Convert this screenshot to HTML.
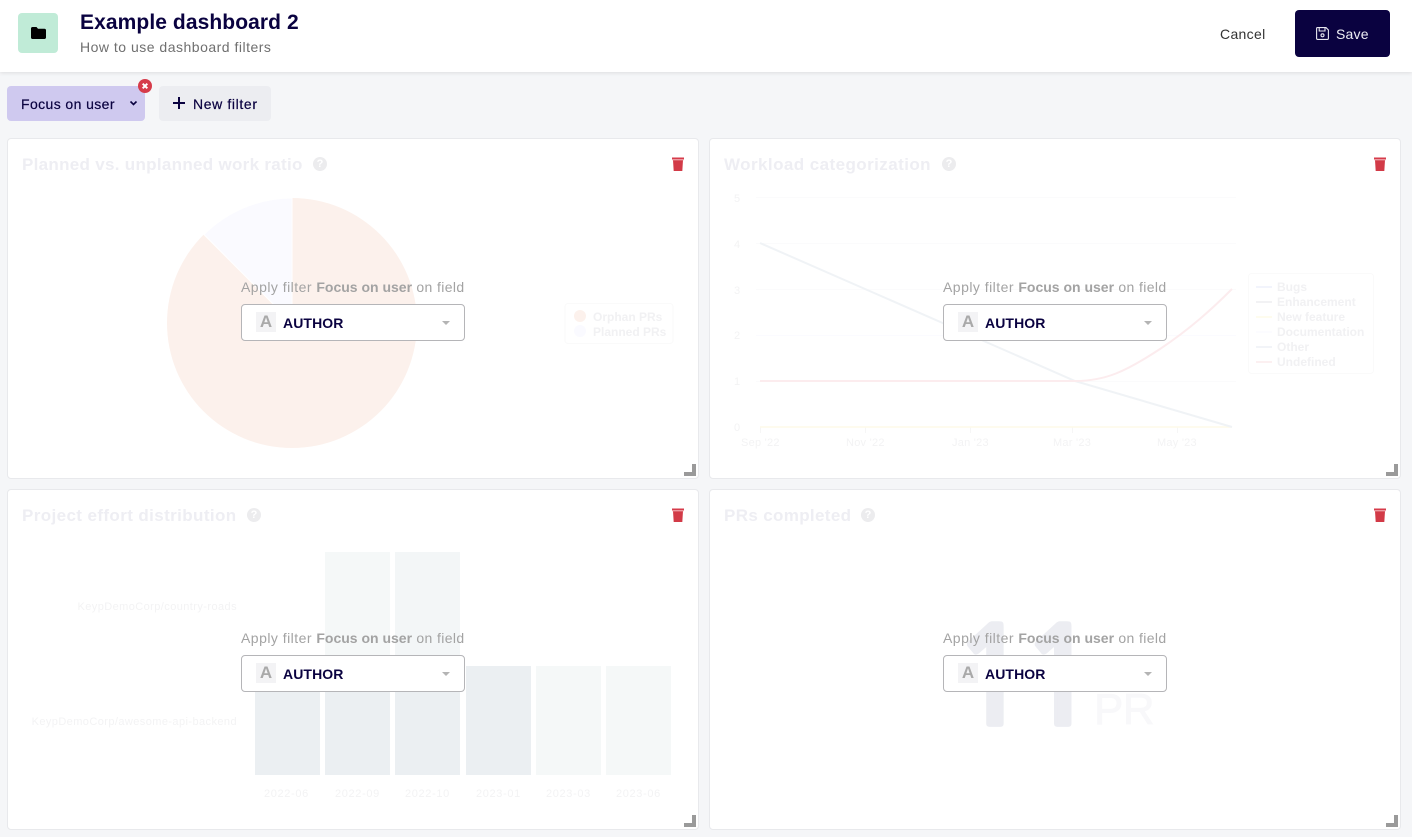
<!DOCTYPE html>
<html><head><meta charset="utf-8">
<style>
html,body{margin:0;padding:0}
body{width:1412px;height:837px;background:#f5f6f8;font-family:"Liberation Sans",sans-serif;position:relative;overflow:hidden;color:#0a0240}
.a{position:absolute;white-space:nowrap}
.hdr{left:0;top:0;width:1412px;height:72px;background:#fff;box-shadow:0 1px 4px rgba(0,0,0,.1)}
.card{position:absolute;width:690px;height:339px;background:#fff;border:1px solid #e8e9ec;border-radius:4px;box-sizing:content-box}
.ct{font-weight:bold;font-size:17px;color:#eeeef3;line-height:20px}
.q{width:14px;height:14px;border-radius:50%;background:#ececee;color:#fff;font-size:11px;font-weight:bold;text-align:center;line-height:14px}
.ap{font-size:14px;line-height:18px;color:#a3a3a3;letter-spacing:.47px}
.ap b{color:#a3a3a3;letter-spacing:0}
.ap span{letter-spacing:.39px}
.sel{width:222px;height:35px;background:#fff;border:1px solid #b5b5b8;border-radius:4px}
.ic{width:20px;height:20px;background:#f3f3f5;color:#a9a9a9;font:bold 17px/20px "Liberation Sans",sans-serif;text-align:center}
.au{font-size:14px;font-weight:bold;line-height:18px;color:#0a0240;letter-spacing:.1px}
.ar{width:0;height:0;border-left:4.5px solid transparent;border-right:4.5px solid transparent;border-top:4.5px solid #b4b4b4}
.lbl{font-size:11px;line-height:14px;color:#f3f3f4;letter-spacing:.25px}
.kp{letter-spacing:.42px;right:1175px}
.dt{letter-spacing:.65px}
.lg{font-size:12px;font-weight:bold;line-height:15px;color:#f1f1f3}
.m{-webkit-text-stroke:.2px #0a0240}
</style></head>
<body>
<div class="a hdr"></div>
<div class="a" style="left:18px;top:13px;width:40px;height:40px;background:#c0ebd7;border-radius:4px"></div>
<svg class="a" style="left:31px;top:27px" width="15" height="12" viewBox="0 0 15 12"><path d="M0 1.5C0 .7.6 0 1.4 0H5.5L7 1.7H13.5C14.3 1.7 15 2.3 15 3.1V10.5C15 11.3 14.3 12 13.5 12H1.4C.6 12 0 11.3 0 10.5Z" fill="#000"/></svg>
<div class="a" style="left:80px;top:10px;font-size:21px;font-weight:bold;line-height:26px;letter-spacing:.09px">Example dashboard 2</div>
<div class="a" style="left:80px;top:38px;font-size:14px;line-height:18px;color:#6f6f6f;letter-spacing:.5px">How to use dashboard filters</div>
<div class="a" style="left:1220px;top:25px;font-size:14px;line-height:18px;color:#333;letter-spacing:.33px">Cancel</div>
<div class="a" style="left:1295px;top:10px;width:95px;height:47px;background:#0a0240;border-radius:4px"></div>
<svg class="a" style="left:1316px;top:27px" width="13" height="13" viewBox="0 0 13 13" fill="none" stroke="#e8e7f0" stroke-width="1.1"><path d="M.6 1.6C.6 1 1 .6 1.6.6H10L12.4 3V11.4C12.4 12 12 12.4 11.4 12.4H1.6C1 12.4.6 12 .6 11.4Z"/><path d="M3.2.8V4H9V.8"/><circle cx="6.5" cy="8.3" r="1.5"/></svg>
<div class="a" style="left:1336px;top:25px;font-size:14px;line-height:18px;color:#eeeef5;letter-spacing:.2px">Save</div>

<div class="a" style="left:7px;top:86px;width:138px;height:35px;background:#cfc9ef;border-radius:4px"></div>
<div class="a m" style="left:21px;top:95px;font-size:14px;line-height:18px;letter-spacing:.4px">Focus on user</div>
<svg class="a" style="left:129px;top:100px" width="9" height="7" viewBox="0 0 9 7"><path d="M1.5 1.5L4.5 4.5L7.500 1.500" fill="none" stroke="#0a0240" stroke-width="1.6"/></svg>
<svg class="a" style="left:138px;top:79px" width="14" height="14" viewBox="0 0 14 14"><circle cx="7" cy="7" r="7" fill="#d63b4a"/><path d="M4.700 4.700L9.300 9.300M9.300 4.700L4.700 9.300" stroke="#fff" stroke-width="2"/></svg>
<div class="a" style="left:159px;top:86px;width:112px;height:35px;background:#ecedf1;border-radius:4px"></div>
<svg class="a" style="left:173px;top:97px" width="12" height="12" viewBox="0 0 12 12"><path d="M6 0V12M0 6H12" stroke="#0a0240" stroke-width="2"/></svg>
<div class="a m" style="left:193px;top:95px;font-size:14px;line-height:18px;letter-spacing:.63px">New filter</div>

<div class="card" style="left:7px;top:138px"></div>
<div class="card" style="left:709px;top:138px"></div>
<div class="card" style="left:7px;top:489px"></div>
<div class="card" style="left:709px;top:489px"></div>

<div class="a ct" style="left:22px;top:155px;letter-spacing:.3px">Planned vs. unplanned work ratio</div>
<div class="a q" style="left:313px;top:157px">?</div>
<div class="a ct" style="left:724px;top:155px;letter-spacing:.43px">Workload categorization</div>
<div class="a q" style="left:942px;top:157px">?</div>
<div class="a ct" style="left:22px;top:506px;letter-spacing:.39px">Project effort distribution</div>
<div class="a q" style="left:247px;top:508px">?</div>
<div class="a ct" style="left:724px;top:506px;letter-spacing:.35px">PRs completed</div>
<div class="a q" style="left:861px;top:508px">?</div>

<svg class="a" style="left:0;top:0" width="1412" height="837">
<circle cx="292" cy="323" r="125" fill="#fcf1ec"/>
<path d="M292 323L204 234.6A125 125 0 0 1 292 198Z" fill="#fafaff" stroke="#fff" stroke-width="1"/>
<g stroke="#fbfbfc" stroke-width="1"><path d="M756 197.5H1236M756 243.5H1236M756 289.5H1236M756 381.5H1236"/></g>
<path d="M756 335.5H1236" stroke="#fbfbff"/>
<g stroke="#f6f6f6"><path d="M760.5 427V433M865.5 427V433M970.5 427V433M1072.5 427V433M1177.5 427V433"/></g>
<path d="M760 427H1232" stroke="#fdfae9" stroke-width="1.5"/>
<path d="M760 243L1075 381L1232 427" fill="none" stroke="#f0f3f6" stroke-width="2"/>
<path d="M760 381H1075C1105 381 1125 372 1160 349C1190 329 1212 309 1232 289" fill="none" stroke="#fcecee" stroke-width="2"/>
<rect x="565" y="303.5" width="108" height="40" rx="3" fill="#fff" stroke="#fafafa"/>
<circle cx="580" cy="316" r="6" fill="#fcf1ec"/><circle cx="580" cy="331" r="6" fill="#fafaff"/>
<rect x="1248.5" y="273.5" width="125" height="100" rx="3" fill="#fff" stroke="#fafafa"/>
<g stroke-width="1.5"><path d="M1256 287H1272" stroke="#edf1fb"/><path d="M1256 302H1272" stroke="#eeeef1"/><path d="M1256 317H1272" stroke="#fdfae9"/><path d="M1256 332H1272" stroke="#fafaff"/><path d="M1256 347H1272" stroke="#eef1f5"/><path d="M1256 362H1272" stroke="#fbeaec"/></g>
<rect x="325" y="552" width="65" height="114" fill="#f5f8f8"/><rect x="395" y="552" width="65" height="114" fill="#f3f6f7"/>
<rect x="255" y="666" width="65" height="109" fill="#ebeff2"/><rect x="325" y="666" width="65" height="109" fill="#ebeff2"/><rect x="395" y="666" width="65" height="109" fill="#ebeff2"/><rect x="466" y="666" width="65" height="109" fill="#ebeff2"/><rect x="536" y="666" width="65" height="109" fill="#f5f8f8"/><rect x="606" y="666" width="65" height="109" fill="#f5f8f8"/>
<defs><g id="t"><path d="M0 .5H12V2H0Z" fill="#d63b4a"/><path d="M0 2H12V3.200H0Z" fill="#ec98a0"/><path d="M1 3.200H11L10.300 14H1.700Z" fill="#d23a47"/></g></defs>
<use href="#t" x="672" y="157"/><use href="#t" x="1374" y="157"/><use href="#t" x="672" y="508"/><use href="#t" x="1374" y="508"/>
<g fill="#9a9a9a"><path d="M684 476H696V464H692V472H684Z"/><path d="M1386 476H1398V464H1394V472H1386Z"/><path d="M684 827H696V815H692V823H684Z"/><path d="M1386 827H1398V815H1394V823H1386Z"/></g>
</svg>

<div class="a lbl" style="left:734px;top:192px">5</div><div class="a lbl" style="left:734px;top:238px">4</div><div class="a lbl" style="left:734px;top:284px">3</div><div class="a lbl" style="left:734px;top:329px">2</div><div class="a lbl" style="left:734px;top:375px">1</div><div class="a lbl" style="left:734px;top:421px">0</div>
<div class="a lbl" style="left:741px;top:436px">Sep '22</div><div class="a lbl" style="left:846px;top:436px">Nov '22</div><div class="a lbl" style="left:952px;top:436px">Jan '23</div><div class="a lbl" style="left:1053px;top:436px">Mar '23</div><div class="a lbl" style="left:1157px;top:436px">May '23</div>
<div class="a lg" style="left:593px;top:310px">Orphan PRs</div><div class="a lg" style="left:593px;top:325px">Planned PRs</div>
<div class="a lg" style="left:1277px;top:280px">Bugs</div><div class="a lg" style="left:1277px;top:295px">Enhancement</div><div class="a lg" style="left:1277px;top:310px">New feature</div><div class="a lg" style="left:1277px;top:325px">Documentation</div><div class="a lg" style="left:1277px;top:340px">Other</div><div class="a lg" style="left:1277px;top:355px">Undefined</div>
<div class="a lbl kp" style="top:600px">KeypDemoCorp/country-roads</div><div class="a lbl kp" style="top:715px">KeypDemoCorp/awesome-api-backend</div>
<div class="a lbl dt" style="left:264px;top:787px">2022-06</div><div class="a lbl dt" style="left:335px;top:787px">2022-09</div><div class="a lbl dt" style="left:405px;top:787px">2022-10</div><div class="a lbl dt" style="left:476px;top:787px">2023-01</div><div class="a lbl dt" style="left:546px;top:787px">2023-03</div><div class="a lbl dt" style="left:616px;top:787px">2023-06</div>
<div class="a" style="left:951px;top:604px;font-family:'NanumGothic','Liberation Sans',sans-serif;font-size:135px;font-weight:700;line-height:150px;color:#ecedf2;letter-spacing:-14px;-webkit-text-stroke:3px #ecedf2">11</div>
<div class="a" style="left:1094px;top:685px;font-size:44px;line-height:50px;color:#f8f8fa;letter-spacing:-.5px;-webkit-text-stroke:.8px #f8f8fa">PR</div>

<div class="a ap" style="left:241px;top:278px">Apply filter <b>Focus on user</b><span> on field</span></div>
<div class="a sel" style="left:241px;top:304px"></div><div class="a ic" style="left:256px;top:312px">A</div><div class="a au" style="left:283px;top:314px">AUTHOR</div><div class="a ar" style="left:442px;top:321px"></div>
<div class="a ap" style="left:943px;top:278px">Apply filter <b>Focus on user</b><span> on field</span></div>
<div class="a sel" style="left:943px;top:304px"></div><div class="a ic" style="left:958px;top:312px">A</div><div class="a au" style="left:985px;top:314px">AUTHOR</div><div class="a ar" style="left:1144px;top:321px"></div>
<div class="a ap" style="left:241px;top:629px">Apply filter <b>Focus on user</b><span> on field</span></div>
<div class="a sel" style="left:241px;top:655px"></div><div class="a ic" style="left:256px;top:663px">A</div><div class="a au" style="left:283px;top:665px">AUTHOR</div><div class="a ar" style="left:442px;top:672px"></div>
<div class="a ap" style="left:943px;top:629px">Apply filter <b>Focus on user</b><span> on field</span></div>
<div class="a sel" style="left:943px;top:655px"></div><div class="a ic" style="left:958px;top:663px">A</div><div class="a au" style="left:985px;top:665px">AUTHOR</div><div class="a ar" style="left:1144px;top:672px"></div>
</body></html>
